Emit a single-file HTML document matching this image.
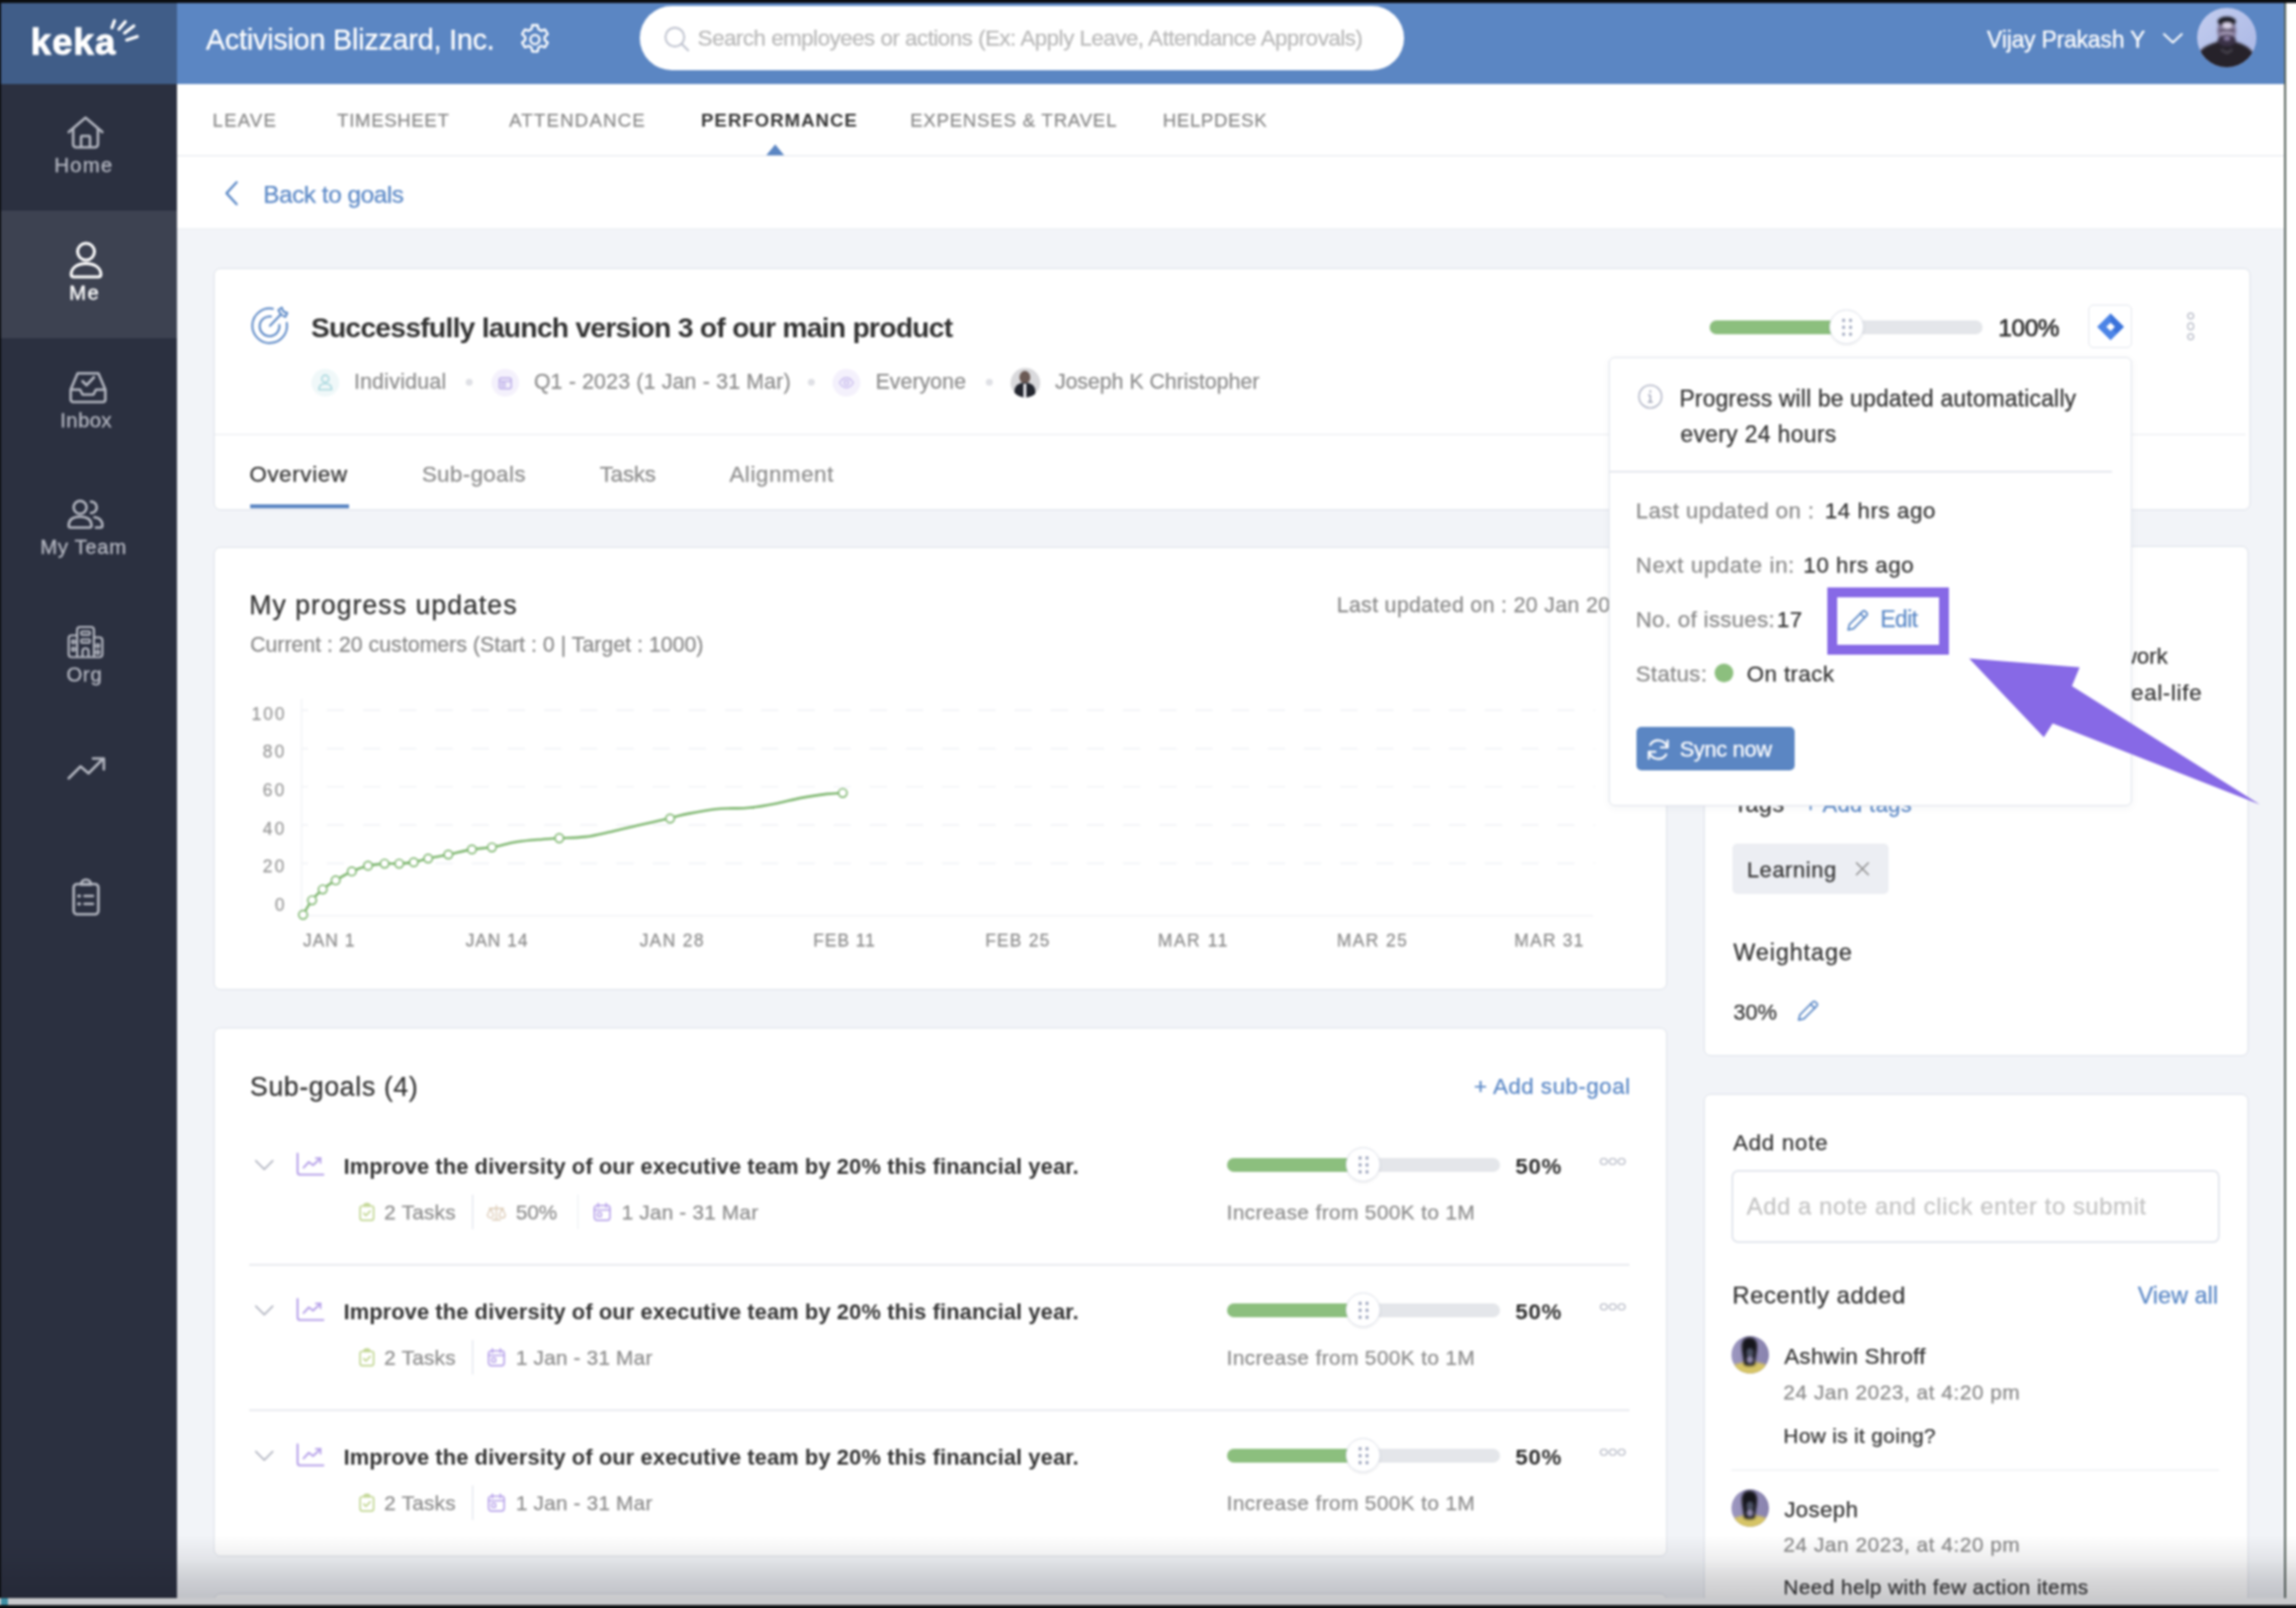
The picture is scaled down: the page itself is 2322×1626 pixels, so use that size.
<!DOCTYPE html>
<html lang="en">
<head>
<meta charset="utf-8">
<title>Keka - Goal details</title>
<style>
html,body{margin:0;padding:0}
html{background:#0b0d10}
body{width:2322px;height:1626px;position:relative;overflow:hidden;background:#0b0d10;font-family:"Liberation Sans",sans-serif;}
#clip{left:0;top:0;width:2322px;height:1626px;overflow:hidden}
#pg{left:-20px;top:-20px;width:2362px;height:1666px;background:#0b0d10;filter:blur(.8px)}
#in{left:20px;top:20px;width:2322px;height:1626px}
div,span,svg,header,nav,main,section,a,p,h1,h2,h3,h4,button{position:absolute;box-sizing:border-box;margin:0;padding:0;border:0}
svg{overflow:visible}
a{text-decoration:none}
.t{white-space:pre;line-height:1;display:block;-webkit-text-stroke:.25px}
button{font-family:inherit}
</style>
</head>
<body>
<div id="clip"><div id="pg"><div id="in">
<div class="app" style="left:1px;top:3px;width:2310px;height:1613px;background:#f2f4f8;"></div>
<div style="left:2310.3px;top:3px;width:1.7px;height:1613px;background:#56625b;"></div>
<div style="left:2312px;top:3px;width:40px;height:1620px;background:#fff;"></div>
<header style="left:1px;top:3px;width:2309px;height:81.5px;background:#5b86c3;">
<div class="logo" style="left:0px;top:0px;width:177.5px;height:81.5px;background:#405d88;"></div>
<span id="t1" class="t" style="left:30.00px;top:21.38px;font-size:37px;color:#fff;font-weight:700;letter-spacing:1.089px;-webkit-text-stroke:0.9px;">keka</span>
<svg style="left:107px;top:13px;" width="36" height="30" viewBox="108 16 36 30" fill="none"><path d="M113.200 28l2.600-7M120.300 29.600l6.400-7.700M125.900 33.400l9.400-7.200M128.100 40.400l10.700-3.500" stroke="#fff" stroke-width="3.200" stroke-linecap="round"/></svg>
<h1 id="t2" class="t" style="left:207.30px;top:23.45px;font-size:29px;color:#fff;letter-spacing:-0.187px;font-weight:400;">Activision Blizzard, Inc.</h1>
<svg style="left:523px;top:20px;" width="34" height="34" viewBox="0 0 34 34" fill="none"><path d="M14.300 2.500h5.400l.9 4.100 2.600 1.500 4-1.300 2.700 4.700-3.100 2.800v3l3.100 2.800-2.700 4.700-4-1.300-2.600 1.500-.9 4.100h-5.400l-.9-4.100-2.600-1.500-4 1.300-2.700-4.700 3.100-2.800v-3L4.100 11.500l2.700-4.700 4 1.300 2.600-1.500z" stroke="#fff" stroke-width="2.300" stroke-linejoin="round"/><circle cx="17" cy="17" r="4.600" stroke="#fff" stroke-width="2.300"/></svg>
<div class="search" style="left:646px;top:3px;width:773px;height:65px;background:#fff;border-radius:33px;">
<svg style="left:24px;top:20px;" width="27" height="27" viewBox="0 0 27 27" fill="none"><circle cx="11.500" cy="11.500" r="9.500" stroke="#bfc3cf" stroke-width="1.900"/><path d="m18.500 18.500 6.500 6.500" stroke="#bfc3cf" stroke-width="1.900" stroke-linecap="round"/></svg>
<span id="t3" class="t" style="left:58.60px;top:22.35px;font-size:22.5px;color:#b9b9b9;letter-spacing:-0.457px;">Search employees or actions (Ex: Apply Leave, Attendance Approvals)</span>
</div>
<span id="t4" class="t" style="left:2008.60px;top:25.83px;font-size:23px;color:#fff;letter-spacing:-0.114px;">Vijay Prakash Y</span>
<svg style="left:2185.5px;top:30px;" width="21" height="12" viewBox="0 0 21 12" fill="none"><path d="m1.500 1.500 9 8.500 9-8.500" stroke="#fff" stroke-width="2" stroke-linecap="round" stroke-linejoin="round"/></svg>
<svg style="left:2220.8px;top:4.8px;" width="60" height="60" viewBox="2221.800 7.800 60 60" fill="none"><defs><clipPath id="cpA"><circle cx="2251.800" cy="37.800" r="30"/></clipPath><linearGradient id="gA" x1="0" y1="0" x2="1" y2="1"><stop offset="0" stop-color="#c3cdef"/><stop offset="1" stop-color="#a9b6e4"/></linearGradient><filter id="blA" x="-20%" y="-20%" width="140%" height="140%"><feGaussianBlur stdDeviation=".9"/></filter></defs><circle cx="2251.800" cy="37.800" r="30" fill="url(#gA)"/><g clip-path="url(#cpA)"><g filter="url(#blA)"><path d="M2222 56c3-7 10-11 19-13.500l4-2.500h13l4 2.500c9 2.500 15 7 18.500 14v16h-58.500z" fill="#25222b"/><ellipse cx="2251.700" cy="31" rx="9.700" ry="13" fill="#857b9b"/><ellipse cx="2251.800" cy="21.500" rx="9.300" ry="5" fill="#1f1c25"/><ellipse cx="2252.300" cy="25.500" rx="5" ry="3.300" fill="#d9d2e6"/><rect x="2243.500" y="29" width="16.500" height="3" rx="1.500" fill="#5b5169"/><ellipse cx="2251.800" cy="34.500" rx="6.500" ry="3" fill="#a79dbb"/><ellipse cx="2251.800" cy="40.500" rx="9.300" ry="6" fill="#3b3347"/><ellipse cx="2252" cy="38.500" rx="3" ry="2.200" fill="#8d7fa6"/><path d="M2246 50l6 3.500 5.500-3.500" stroke="#55515c" stroke-width="1.500"/></g></g></svg>
</header>
<nav class="side" style="left:1px;top:84.5px;width:177.5px;height:1531.5px;background:#2b3040;">
<div style="left:0px;top:128.5px;width:177.5px;height:128.5px;background:#3d4251;"></div>
<svg style="left:67px;top:32.8px;" width="37" height="34" viewBox="0 0 37 34" fill="none"><g stroke="#b3b6c0" stroke-width="2.6"><path d="M1.5 16.5 18.5 2l17 14.5" stroke-linecap="round" stroke-linejoin="round"/><path d="M6 13v16a3 3 0 0 0 3 3h19a3 3 0 0 0 3-3V13"/><path d="M14 32V21.5a1 1 0 0 1 1-1h7a1 1 0 0 1 1 1V32"/></g></svg>
<span id="t5" class="t" style="left:54.00px;top:72.75px;font-size:20.5px;color:#b3b6c0;letter-spacing:1.239px;-webkit-text-stroke:0.35px;">Home</span>
<svg style="left:69px;top:159.1px;" width="34" height="38" viewBox="0 0 34 38" fill="none"><g stroke="#fff" stroke-width="3"><circle cx="17" cy="10.5" r="8.5"/><path d="M2 33.5C2 26.5 8.5 22.5 17 22.5s15 4 15 11a2.5 2.5 0 0 1-2.5 2.5h-25A2.5 2.5 0 0 1 2 33.500z"/></g></svg>
<span id="t6" class="t" style="left:69.00px;top:201.15px;font-size:20.5px;color:#fff;letter-spacing:1.423px;-webkit-text-stroke:0.35px;">Me</span>
<svg style="left:69px;top:291px;" width="38" height="32" viewBox="0 0 38 32" fill="none"><g stroke="#b3b6c0" stroke-width="2.6"><path d="M8.500 1.500h21L36.500 18v10a2.500 2.500 0 0 1-2.500 2.500H4A2.500 2.500 0 0 1 1.500 28V18z" stroke-linejoin="round"/><path d="M1.500 18H11l2.500 5h11L27 18h9.500" stroke-linejoin="round"/><path d="m13.500 9.500 4 4 7.500-8" stroke-linecap="round" stroke-linejoin="round"/></g></svg>
<span id="t7" class="t" style="left:60.00px;top:330.35px;font-size:20.5px;color:#b3b6c0;letter-spacing:0.400px;-webkit-text-stroke:0.35px;">Inbox</span>
<svg style="left:67px;top:420.9px;" width="37" height="30" viewBox="0 0 37 30" fill="none"><g stroke="#b3b6c0" stroke-width="2.6"><circle cx="13" cy="8" r="6.500"/><path d="M1.500 26.500C1.500 20.500 6 17.500 13 17.500s11.500 3 11.500 9a2 2 0 0 1-2 2h-19a2 2 0 0 1-2-2z"/><path d="M24 2.200a5.800 5.800 0 1 1 0 11.600" stroke-linecap="round"/><path d="M27.500 18c5 .500 8 3.500 8 8.500a2 2 0 0 1-2 2H29" stroke-linecap="round"/></g></svg>
<span id="t8" class="t" style="left:39.80px;top:458.75px;font-size:20.5px;color:#b3b6c0;letter-spacing:0.654px;-webkit-text-stroke:0.35px;">My Team</span>
<svg style="left:67px;top:547.1px;" width="37" height="34" viewBox="0 0 37 34" fill="none"><g stroke="#b3b6c0" stroke-width="2.2"><path d="M10 32.500V5a3 3 0 0 1 3-3h11a3 3 0 0 1 3 3v27.500" /><path d="M10 10.500H4.500a3 3 0 0 0-3 3v16a3 3 0 0 0 3 3h28a3 3 0 0 0 3-3v-14a3 3 0 0 0-3-3H27"/><path d="M15.500 32.500v-6a3 3 0 0 1 6 0v6"/><rect x="14" y="6.500" width="9" height="3.500" rx="1" stroke-width="1.800"/><rect x="14" y="14.500" width="9" height="3.500" rx="1" stroke-width="1.800"/><rect x="4.800" y="15.500" width="3" height="3" rx=".8" stroke-width="1.800"/><rect x="4.800" y="23" width="3" height="3" rx=".8" stroke-width="1.800"/><rect x="29.300" y="19.500" width="3" height="3" rx=".8" stroke-width="1.800"/><rect x="29.300" y="26" width="3" height="3" rx=".8" stroke-width="1.800"/></g></svg>
<span id="t9" class="t" style="left:66.20px;top:587.15px;font-size:20.5px;color:#b3b6c0;letter-spacing:0.714px;-webkit-text-stroke:0.35px;">Org</span>
<svg style="left:67px;top:680.5px;" width="39" height="24" viewBox="0 0 39 24" fill="none"><g stroke="#b3b6c0" stroke-width="2.6"><path d="M1.500 22 13.500 10l8 7L36 2.500" stroke-linecap="round" stroke-linejoin="round"/><path d="M26 2h11v11" stroke-linecap="round" stroke-linejoin="round"/></g></svg>
<svg style="left:72px;top:803px;" width="28" height="38" viewBox="0 0 28 38" fill="none"><g stroke="#b3b6c0" stroke-width="2.6"><rect x="1.500" y="6" width="25" height="30.500" rx="3.500"/><path d="M9 6.500c0-3 2-5 5-5s5 2 5 5z" stroke-linejoin="round"/><path d="M12.500 18H21M12.500 26H21" stroke-linecap="round"/><path d="M6.500 18h1M6.500 26h1" stroke-linecap="round" stroke-width="3"/></g></svg>
</nav>
<main style="left:178.5px;top:84.5px;width:2131.5px;height:1531.5px;">
<nav class="subnav" style="left:0px;top:0px;width:2131.5px;height:73.5px;background:#fff;border-bottom:1.5px solid #e3e6ec;">
<a id="t10" class="t" style="left:36.50px;top:28.57px;font-size:18.7px;color:#8a8a8a;letter-spacing:1.275px;">LEAVE</a>
<a id="t11" class="t" style="left:162.50px;top:28.57px;font-size:18.7px;color:#8a8a8a;letter-spacing:0.747px;">TIMESHEET</a>
<a id="t12" class="t" style="left:336.50px;top:28.57px;font-size:18.7px;color:#8a8a8a;letter-spacing:1.298px;">ATTENDANCE</a>
<a id="t13" class="t" style="left:530.50px;top:28.57px;font-size:18.7px;color:#363636;font-weight:700;letter-spacing:1.108px;-webkit-text-stroke:0;">PERFORMANCE</a>
<a id="t14" class="t" style="left:742.00px;top:28.57px;font-size:18.7px;color:#8a8a8a;letter-spacing:0.874px;">EXPENSES &amp; TRAVEL</a>
<a id="t15" class="t" style="left:997.50px;top:28.57px;font-size:18.7px;color:#8a8a8a;letter-spacing:0.751px;">HELPDESK</a>
<svg style="left:596.5px;top:61.5px;" width="18" height="11" viewBox="0 0 18 11" fill="none"><path d="M9 0 18 11H0z" fill="#5b86c3"/></svg>
</nav>
<div class="backrow" style="left:0px;top:73.5px;width:2131.5px;height:74px;background:#fff;border-bottom:1.5px solid #e9ebf0;">
<svg style="left:47.5px;top:24px;" width="16" height="26.7" viewBox="0 0 18 30" fill="none"><path d="M15 2.500 3.500 15 15 27.500" stroke="#5b88c6" stroke-width="2.600" stroke-linecap="round" stroke-linejoin="round"/></svg>
<a id="t16" class="t" style="left:87.80px;top:26.86px;font-size:24.5px;color:#5b88c6;letter-spacing:-0.403px;">Back to goals</a>
</div>
<section class="card goal" style="left:37.5px;top:186.5px;width:2059.5px;height:245.3px;background:#fff;border:1.6px solid #dde1e9;border-radius:7px;">
<svg style="left:36.4px;top:37.4px;" width="40" height="40" viewBox="0 0 40 40" fill="none"><g stroke="#5b88c6" stroke-width="2" stroke-linecap="round"><path d="M23 3.200A17.500 17.500 0 1 0 37 17.500"/><path d="M21 11A10 10 0 1 0 29.500 19.500"/><path d="M20 20.500 31 9"/><path d="M28.500 4.500 31 9l4.500 2.500 2-4-4-1.500-1.500-4z" stroke-linejoin="round" stroke-width="2"/></g></svg>
<h2 id="t17" class="t" style="left:97.40px;top:45.27px;font-size:28.5px;color:#323232;font-weight:700;letter-spacing:-0.722px;-webkit-text-stroke:0;">Successfully launch version 3 of our main product</h2>
<div style="left:97.9px;top:100.6px;width:28px;height:28px;border-radius:50%;background:#f0f8f9;"></div>
<svg style="left:103.9px;top:105.6px;" width="16" height="18" viewBox="0 0 16 18" fill="none"><circle cx="8" cy="5" r="3.600" stroke="#aad8de" stroke-width="1.600"/><path d="M1.500 16c0-4 2.800-6 6.500-6s6.500 2 6.500 6z" stroke="#aad8de" stroke-width="1.600" stroke-linejoin="round"/></svg>
<span id="t18" class="t" style="left:140.90px;top:103.90px;font-size:21.5px;color:#8d8d8d;letter-spacing:0.271px;">Individual</span>
<div style="left:253.9px;top:111.1px;width:7px;height:7px;border-radius:50%;background:#dfe0e5;"></div>
<div style="left:279.9px;top:100.6px;width:28px;height:28px;border-radius:50%;background:#f4f1fc;"></div>
<svg style="left:286.9px;top:107.6px;" width="14" height="14" viewBox="0 0 14 14" fill="none"><rect x="1" y="2.200" width="12" height="10.800" rx="2" stroke="#bcaee8" stroke-width="1.500"/><path d="M1 5.500h12" stroke="#bcaee8" stroke-width="1.500"/><rect x="3.500" y="7.500" width="3.200" height="3.200" stroke="#bcaee8" stroke-width="1.200"/></svg>
<span id="t19" class="t" style="left:322.90px;top:103.90px;font-size:21.5px;color:#8d8d8d;letter-spacing:0.205px;">Q1 - 2023 (1 Jan - 31 Mar)</span>
<div style="left:599.9px;top:111.1px;width:7px;height:7px;border-radius:50%;background:#dfe0e5;"></div>
<div style="left:625.4px;top:100.6px;width:28px;height:28px;border-radius:50%;background:#f4f1fc;"></div>
<svg style="left:631.4px;top:108.6px;" width="16" height="12" viewBox="0 0 16 12" fill="none"><path d="M1 6c2-3.300 4.300-5 7-5s5 1.700 7 5c-2 3.300-4.300 5-7 5S3 9.300 1 6z" stroke="#c9bdee" stroke-width="1.400"/><circle cx="8" cy="6" r="2.300" stroke="#c9bdee" stroke-width="1.400"/></svg>
<span id="t20" class="t" style="left:668.40px;top:103.90px;font-size:21.5px;color:#8d8d8d;letter-spacing:0.090px;">Everyone</span>
<div style="left:779.9px;top:111.1px;width:7px;height:7px;border-radius:50%;background:#dfe0e5;"></div>
<div class="avatar" style="left:804.9px;top:99.6px;width:30px;height:30px;border-radius:50%;overflow:hidden;background:#d9d9dc;">
<div style="left:9px;top:3px;width:11px;height:13px;border-radius:50%;background:#6b5a55;"></div>
<div style="left:4px;top:15px;width:21px;height:18px;border-radius:45% 45% 0 0;background:#23262f;"></div>
<div style="left:13px;top:16px;width:3.5px;height:14px;background:#e8e8ee;"></div>
</div>
<span id="t21" class="t" style="left:849.90px;top:103.90px;font-size:21.5px;color:#8d8d8d;letter-spacing:-0.005px;">Joseph K Christopher</span>
<div style="left:1512.4px;top:51.6px;width:275.3px;height:14.2px;border-radius:8px;background:#e4e6ea;"></div>
<div style="left:1512.4px;top:51.6px;width:138px;height:14.2px;border-radius:8px 0 0 8px;background:#8cbf7e;"></div>
<div style="left:1633.4px;top:41.2px;width:35px;height:35px;border-radius:50%;background:#fff;border:1.800px solid #dfe3ec;box-shadow:0 1px 3px rgba(0,0,0,.08);"></div>
<svg style="left:1643.9px;top:48.7px;" width="14" height="20" viewBox="0 0 14 20" fill="none"><g fill="#a3aac0"><circle cx="3.500" cy="3" r="1.700"/><circle cx="10.500" cy="3" r="1.700"/><circle cx="3.500" cy="10" r="1.700"/><circle cx="10.500" cy="10" r="1.700"/><circle cx="3.500" cy="17" r="1.700"/><circle cx="10.500" cy="17" r="1.700"/></g></svg>
<span id="t22" class="t" style="left:1804.00px;top:47.86px;font-size:24.5px;color:#2e2e2e;letter-spacing:-0.292px;-webkit-text-stroke:0.7px;">100%</span>
<div style="left:1894.9px;top:36.4px;width:43.8px;height:43.8px;border:1.500px solid #e4e7ee;border-radius:5px;background:#fff;"></div>
<svg style="left:1904.4px;top:45.2px;" width="27" height="27" viewBox="0 0 26 26" fill="none"><path d="M13 .500 25.500 13 13 25.500.500 13z" fill="#4c84e6" stroke="#4c84e6" stroke-width="1" stroke-linejoin="round"/><path d="M13 .500 25.500 13 19 19.500 13 13z" fill="#3a72da"/><path d="M13 8.800 17.200 13 13 17.200 8.800 13z" fill="#fff"/></svg>
<div style="left:1994.6px;top:43.9px;width:7.6px;height:7.6px;border-radius:50%;border:1.700px solid #8f95a7;"></div>
<div style="left:1994.6px;top:54.3px;width:7.6px;height:7.6px;border-radius:50%;border:1.700px solid #8f95a7;"></div>
<div style="left:1994.6px;top:64.8px;width:7.6px;height:7.6px;border-radius:50%;border:1.700px solid #8f95a7;"></div>
<div style="left:-0.1px;top:166.9px;width:2054.5px;height:1.5px;background:#e9ebf0;"></div>
<a id="t23" class="t" style="left:35.20px;top:196.85px;font-size:22.5px;color:#333;letter-spacing:0.711px;">Overview</a>
<a id="t24" class="t" style="left:209.70px;top:196.85px;font-size:22.5px;color:#8d8d8d;letter-spacing:0.429px;">Sub-goals</a>
<a id="t25" class="t" style="left:389.50px;top:196.85px;font-size:22.5px;color:#8d8d8d;letter-spacing:-0.166px;">Tasks</a>
<a id="t26" class="t" style="left:520.70px;top:196.85px;font-size:22.5px;color:#8d8d8d;letter-spacing:0.625px;">Alignment</a>
<div style="left:35.6px;top:237.7px;width:100px;height:4px;background:#5b86c3;"></div>
</section>
<section class="card chart" style="left:37.5px;top:468.5px;width:1470px;height:448px;background:#fff;border:1.6px solid #dde1e9;border-radius:7px;">
<h3 id="t27" class="t" style="left:34.90px;top:45.24px;font-size:27px;color:#333;letter-spacing:1.021px;font-weight:400;">My progress updates</h3>
<span id="t28" class="t" style="left:35.90px;top:87.60px;font-size:21.5px;color:#8a8a8a;letter-spacing:0.034px;">Current : 20 customers (Start : 0 | Target : 1000)</span>
<span id="t29" class="t" style="left:1134.90px;top:47.50px;font-size:21.5px;color:#8a8a8a;letter-spacing:0.374px;">Last updated on : 20 Jan 2023</span>
<svg style="left:72.4px;top:145.4px;" width="1340" height="240" viewBox="290 700 1340 240" fill="none"><path d="M306.500 719.3H1614" stroke="#f0f2f6" stroke-width="1.400" stroke-dasharray="17.400 19.200" stroke-dashoffset="11.500"/><path d="M306.500 758H1614" stroke="#f0f2f6" stroke-width="1.400" stroke-dasharray="17.400 19.200" stroke-dashoffset="11.500"/><path d="M306.500 796.6H1614" stroke="#f0f2f6" stroke-width="1.400" stroke-dasharray="17.400 19.200" stroke-dashoffset="11.500"/><path d="M306.500 835.3H1614" stroke="#f0f2f6" stroke-width="1.400" stroke-dasharray="17.400 19.200" stroke-dashoffset="11.500"/><path d="M306.500 874H1614" stroke="#f0f2f6" stroke-width="1.400" stroke-dasharray="17.400 19.200" stroke-dashoffset="11.500"/><path d="M306 708V927H1612" stroke="#f2f3f7" stroke-width="1.500"/><path d="M307.5 926.0C309.0 923.5 313.2 915.7 316.6 911.3C320.0 906.9 323.3 903.7 327.4 900.3C331.5 896.9 335.5 894.3 340.5 891.2C345.5 888.1 351.2 884.7 356.8 882.2C362.4 879.7 367.6 877.7 373.2 876.4C378.8 875.1 384.5 874.7 389.9 874.3C395.3 873.9 399.7 874.5 404.7 874.3C409.7 874.1 414.4 873.8 419.4 872.9C424.4 872.0 428.1 870.4 434.0 869.1C439.9 867.8 446.9 866.7 454.4 865.1C461.9 863.5 470.8 861.1 478.3 859.9C485.8 858.7 490.8 859.1 498.5 857.8C506.2 856.5 514.9 853.7 523.6 852.3C532.3 850.9 542.4 850.3 549.7 849.7C557.0 849.1 559.2 848.9 566.6 848.5C574.0 848.1 584.2 848.2 593.2 847.1C602.2 846.0 610.5 843.8 619.4 841.9C628.3 840.0 635.4 838.1 645.5 835.8C655.6 833.5 669.8 830.3 678.7 828.2C687.6 826.1 690.1 825.1 697.8 823.6C705.5 822.1 716.5 820.1 723.9 819.2C731.3 818.3 735.4 818.6 741.3 818.4C747.2 818.2 751.3 818.6 758.7 817.8C766.1 817.0 776.0 815.4 784.9 813.7C793.8 812.0 802.1 809.6 811.0 807.9C819.9 806.2 829.9 804.8 837.1 803.9C844.3 803.0 850.5 803.0 853.3 802.8" stroke="#84ba76" stroke-width="2.600" fill="none" stroke-linecap="round"/><circle cx="307.5" cy="926" r="4.300" fill="#fff" stroke="#84ba76" stroke-width="1.700"/><circle cx="316.6" cy="911.3" r="4.300" fill="#fff" stroke="#84ba76" stroke-width="1.700"/><circle cx="327.4" cy="900.3" r="4.300" fill="#fff" stroke="#84ba76" stroke-width="1.700"/><circle cx="340.5" cy="891.2" r="4.300" fill="#fff" stroke="#84ba76" stroke-width="1.700"/><circle cx="356.8" cy="882.2" r="4.300" fill="#fff" stroke="#84ba76" stroke-width="1.700"/><circle cx="373.2" cy="876.4" r="4.300" fill="#fff" stroke="#84ba76" stroke-width="1.700"/><circle cx="389.9" cy="874.3" r="4.300" fill="#fff" stroke="#84ba76" stroke-width="1.700"/><circle cx="404.7" cy="874.3" r="4.300" fill="#fff" stroke="#84ba76" stroke-width="1.700"/><circle cx="419.4" cy="872.9" r="4.300" fill="#fff" stroke="#84ba76" stroke-width="1.700"/><circle cx="434" cy="869.1" r="4.300" fill="#fff" stroke="#84ba76" stroke-width="1.700"/><circle cx="454.4" cy="865.1" r="4.300" fill="#fff" stroke="#84ba76" stroke-width="1.700"/><circle cx="478.3" cy="859.9" r="4.300" fill="#fff" stroke="#84ba76" stroke-width="1.700"/><circle cx="498.5" cy="857.8" r="4.300" fill="#fff" stroke="#84ba76" stroke-width="1.700"/><circle cx="566.6" cy="848.5" r="4.300" fill="#fff" stroke="#84ba76" stroke-width="1.700"/><circle cx="678.7" cy="828.6" r="4.300" fill="#fff" stroke="#84ba76" stroke-width="1.700"/><circle cx="853.3" cy="802.8" r="4.300" fill="#fff" stroke="#84ba76" stroke-width="1.700"/></svg>
<span id="t30" class="t" style="left:70.63px;top:159.59px;font-size:17.5px;color:#9a9a9a;letter-spacing:2.017px;transform:translateX(-100%);margin-left:2.017px;">100</span>
<span id="t31" class="t" style="left:70.63px;top:198.29px;font-size:17.5px;color:#9a9a9a;letter-spacing:2.467px;transform:translateX(-100%);margin-left:2.467px;">80</span>
<span id="t32" class="t" style="left:70.63px;top:236.89px;font-size:17.5px;color:#9a9a9a;letter-spacing:2.467px;transform:translateX(-100%);margin-left:2.467px;">60</span>
<span id="t33" class="t" style="left:70.63px;top:275.59px;font-size:17.5px;color:#9a9a9a;letter-spacing:2.467px;transform:translateX(-100%);margin-left:2.467px;">40</span>
<span id="t34" class="t" style="left:70.63px;top:314.29px;font-size:17.5px;color:#9a9a9a;letter-spacing:2.467px;transform:translateX(-100%);margin-left:2.467px;">20</span>
<span id="t35" class="t" style="left:70.63px;top:352.59px;font-size:17.5px;color:#9a9a9a;transform:translateX(-100%);margin-left:0.000px;">0</span>
<span id="t36" class="t" style="left:89.50px;top:389.39px;font-size:17.5px;color:#8f8f8f;letter-spacing:1.069px;">JAN 1</span>
<span id="t37" class="t" style="left:253.90px;top:389.39px;font-size:17.5px;color:#8f8f8f;letter-spacing:1.029px;">JAN 14</span>
<span id="t38" class="t" style="left:429.90px;top:389.39px;font-size:17.5px;color:#8f8f8f;letter-spacing:1.429px;">JAN 28</span>
<span id="t39" class="t" style="left:605.50px;top:389.39px;font-size:17.5px;color:#8f8f8f;letter-spacing:1.014px;">FEB 11</span>
<span id="t40" class="t" style="left:779.40px;top:389.39px;font-size:17.5px;color:#8f8f8f;letter-spacing:1.294px;">FEB 25</span>
<span id="t41" class="t" style="left:953.90px;top:389.39px;font-size:17.5px;color:#8f8f8f;letter-spacing:1.703px;">MAR 11</span>
<span id="t42" class="t" style="left:1134.90px;top:389.39px;font-size:17.5px;color:#8f8f8f;letter-spacing:1.503px;">MAR 25</span>
<span id="t43" class="t" style="left:1314.60px;top:389.39px;font-size:17.5px;color:#8f8f8f;letter-spacing:1.303px;">MAR 31</span>
</section>
<section class="card subgoals" style="left:37.5px;top:954.2px;width:1470px;height:535.5px;background:#fff;border:1.6px solid #dde1e9;border-radius:7px;">
<h3 id="t44" class="t" style="left:35.80px;top:46.64px;font-size:27px;color:#333;letter-spacing:0.626px;font-weight:400;">Sub-goals (4)</h3>
<a id="t45" class="t" style="left:1273.70px;top:47.85px;font-size:22.5px;color:#5b88c6;letter-spacing:0.540px;">+ Add sub-goal</a>
<svg style="left:39.9px;top:132.4px;" width="20.5" height="12.5" viewBox="0 0 23 14" fill="none"><path d="m2 2 9.500 9.500L21 2" stroke="#b4b7c2" stroke-width="2" stroke-linecap="round" stroke-linejoin="round"/></svg>
<svg style="left:82.4px;top:124.9px;" width="29.5" height="24.7" viewBox="0 0 31 26" fill="none"><g stroke="#b9a5ea" stroke-width="2.200" stroke-linecap="round" stroke-linejoin="round"><path d="M2 1.500V21a3 3 0 0 0 3 3h24.500"/><path d="m8.500 16.500 5.500-6 4.500 3.500 8-7.500"/><path d="M21.500 6.500h5v5" stroke-width="1.900"/></g></svg>
<h4 id="t46" class="t" style="left:130.40px;top:128.98px;font-size:22px;color:#343434;font-weight:700;letter-spacing:0.159px;-webkit-text-stroke:0;">Improve the diversity of our executive team by 20% this financial year.</h4>
<svg style="left:145.9px;top:176.4px;" width="16" height="19" viewBox="0 0 16 19" fill="none"><g stroke="#c3d795" stroke-width="1.700" stroke-linejoin="round"><rect x="1.200" y="3.500" width="13.600" height="14.300" rx="2"/><path d="M5 3.500c0-1.500 1.300-2.500 3-2.500s3 1 3 2.500z" fill="#c3d795"/><path d="m4.800 10.800 2.300 2.300 4.200-4.400" stroke-linecap="round"/></g></svg>
<span id="t47" class="t" style="left:171.60px;top:175.42px;font-size:21px;color:#8d8d8d;letter-spacing:0.218px;">2 Tasks</span>
<div style="left:260.4px;top:168.4px;width:1.5px;height:35px;background:#eceef3;"></div>
<svg style="left:275.4px;top:176.9px;" width="20" height="18" viewBox="0 0 20 18" fill="none"><g stroke="#dccbb6" stroke-width="1.300"><path d="M10 1.500v15M2.500 5h15M5.500 16.500h9"/><path d="M1 11.500 4 5l3 6.500a3 3 0 0 1-6 0zM13 11.500 16 5l3 6.500a3 3 0 0 1-6 0z" stroke-linejoin="round"/></g></svg>
<span id="t48" class="t" style="left:304.70px;top:175.42px;font-size:21px;color:#8d8d8d;letter-spacing:-0.179px;">50%</span>
<div style="left:366.9px;top:168.4px;width:1.5px;height:35px;background:#eceef3;"></div>
<svg style="left:383.1px;top:176.4px;" width="18" height="19" viewBox="0 0 18 19" fill="none"><g stroke="#b9a5ea" stroke-width="1.700"><rect x="1.200" y="3" width="15.600" height="14.800" rx="2.500"/><path d="M1.200 7.500h15.600M5 1v3.500M13 1v3.500" stroke-linecap="round"/><rect x="4.300" y="10.300" width="4" height="4" rx=".8" stroke-width="1.400"/></g></svg>
<span id="t49" class="t" style="left:411.70px;top:175.42px;font-size:21px;color:#8d8d8d;letter-spacing:0.200px;">1 Jan - 31 Mar</span>
<div style="left:1024.4px;top:131.1px;width:276px;height:14px;border-radius:7px;background:#e4e6ea;"></div>
<div style="left:1024.4px;top:131.1px;width:138px;height:14px;border-radius:7px 0 0 7px;background:#8cbf7e;"></div>
<div style="left:1144.2px;top:120.4px;width:35px;height:35px;border-radius:50%;background:#fff;border:1.800px solid #dfe3ec;box-shadow:0 1px 3px rgba(0,0,0,.08);"></div>
<svg style="left:1155.4px;top:128.4px;" width="14" height="20" viewBox="0 0 14 20" fill="none"><g fill="#9ea5bd"><rect x="2" y="1.500" width="3" height="3"/><rect x="9" y="1.500" width="3" height="3"/><rect x="2" y="8.500" width="3" height="3"/><rect x="9" y="8.500" width="3" height="3"/><rect x="2" y="15.500" width="3" height="3"/><rect x="9" y="15.500" width="3" height="3"/></g></svg>
<span id="t50" class="t" style="left:1315.40px;top:129.35px;font-size:22.5px;color:#2e2e2e;font-weight:700;letter-spacing:0.737px;-webkit-text-stroke:0;">50%</span>
<div style="left:1401.4px;top:130.9px;width:7.5px;height:7.5px;border-radius:50%;border:1.700px solid #9499aa;"></div>
<div style="left:1410.4px;top:130.9px;width:7.5px;height:7.5px;border-radius:50%;border:1.700px solid #9499aa;"></div>
<div style="left:1419.4px;top:130.9px;width:7.5px;height:7.5px;border-radius:50%;border:1.700px solid #9499aa;"></div>
<span id="t51" class="t" style="left:1023.40px;top:175.32px;font-size:21px;color:#8d8d8d;letter-spacing:0.408px;">Increase from 500K to 1M</span>
<div style="left:35.4px;top:238.7px;width:1396px;height:1.5px;background:#e9ebf0;"></div>
<svg style="left:39.9px;top:279.4px;" width="20.5" height="12.5" viewBox="0 0 23 14" fill="none"><path d="m2 2 9.500 9.500L21 2" stroke="#b4b7c2" stroke-width="2" stroke-linecap="round" stroke-linejoin="round"/></svg>
<svg style="left:82.4px;top:271.9px;" width="29.5" height="24.7" viewBox="0 0 31 26" fill="none"><g stroke="#b9a5ea" stroke-width="2.200" stroke-linecap="round" stroke-linejoin="round"><path d="M2 1.500V21a3 3 0 0 0 3 3h24.500"/><path d="m8.500 16.500 5.500-6 4.500 3.500 8-7.500"/><path d="M21.500 6.500h5v5" stroke-width="1.900"/></g></svg>
<h4 id="t52" class="t" style="left:130.40px;top:275.98px;font-size:22px;color:#343434;font-weight:700;letter-spacing:0.159px;-webkit-text-stroke:0;">Improve the diversity of our executive team by 20% this financial year.</h4>
<svg style="left:145.9px;top:323.4px;" width="16" height="19" viewBox="0 0 16 19" fill="none"><g stroke="#c3d795" stroke-width="1.700" stroke-linejoin="round"><rect x="1.200" y="3.500" width="13.600" height="14.300" rx="2"/><path d="M5 3.500c0-1.500 1.300-2.500 3-2.500s3 1 3 2.500z" fill="#c3d795"/><path d="m4.800 10.800 2.300 2.300 4.200-4.400" stroke-linecap="round"/></g></svg>
<span id="t53" class="t" style="left:171.60px;top:322.42px;font-size:21px;color:#8d8d8d;letter-spacing:0.218px;">2 Tasks</span>
<div style="left:260.4px;top:315.4px;width:1.5px;height:35px;background:#eceef3;"></div>
<svg style="left:276.1px;top:323.4px;" width="18" height="19" viewBox="0 0 18 19" fill="none"><g stroke="#b9a5ea" stroke-width="1.700"><rect x="1.200" y="3" width="15.600" height="14.800" rx="2.500"/><path d="M1.200 7.500h15.600M5 1v3.500M13 1v3.500" stroke-linecap="round"/><rect x="4.300" y="10.300" width="4" height="4" rx=".8" stroke-width="1.400"/></g></svg>
<span id="t54" class="t" style="left:304.70px;top:322.42px;font-size:21px;color:#8d8d8d;letter-spacing:0.200px;">1 Jan - 31 Mar</span>
<div style="left:1024.4px;top:278.1px;width:276px;height:14px;border-radius:7px;background:#e4e6ea;"></div>
<div style="left:1024.4px;top:278.1px;width:138px;height:14px;border-radius:7px 0 0 7px;background:#8cbf7e;"></div>
<div style="left:1144.2px;top:267.4px;width:35px;height:35px;border-radius:50%;background:#fff;border:1.800px solid #dfe3ec;box-shadow:0 1px 3px rgba(0,0,0,.08);"></div>
<svg style="left:1155.4px;top:275.4px;" width="14" height="20" viewBox="0 0 14 20" fill="none"><g fill="#9ea5bd"><rect x="2" y="1.500" width="3" height="3"/><rect x="9" y="1.500" width="3" height="3"/><rect x="2" y="8.500" width="3" height="3"/><rect x="9" y="8.500" width="3" height="3"/><rect x="2" y="15.500" width="3" height="3"/><rect x="9" y="15.500" width="3" height="3"/></g></svg>
<span id="t55" class="t" style="left:1315.40px;top:276.35px;font-size:22.5px;color:#2e2e2e;font-weight:700;letter-spacing:0.737px;-webkit-text-stroke:0;">50%</span>
<div style="left:1401.4px;top:277.9px;width:7.5px;height:7.5px;border-radius:50%;border:1.700px solid #9499aa;"></div>
<div style="left:1410.4px;top:277.9px;width:7.5px;height:7.5px;border-radius:50%;border:1.700px solid #9499aa;"></div>
<div style="left:1419.4px;top:277.9px;width:7.5px;height:7.5px;border-radius:50%;border:1.700px solid #9499aa;"></div>
<span id="t56" class="t" style="left:1023.40px;top:322.32px;font-size:21px;color:#8d8d8d;letter-spacing:0.408px;">Increase from 500K to 1M</span>
<div style="left:35.4px;top:385.7px;width:1396px;height:1.5px;background:#e9ebf0;"></div>
<svg style="left:39.9px;top:426.4px;" width="20.5" height="12.5" viewBox="0 0 23 14" fill="none"><path d="m2 2 9.500 9.500L21 2" stroke="#b4b7c2" stroke-width="2" stroke-linecap="round" stroke-linejoin="round"/></svg>
<svg style="left:82.4px;top:418.9px;" width="29.5" height="24.7" viewBox="0 0 31 26" fill="none"><g stroke="#b9a5ea" stroke-width="2.200" stroke-linecap="round" stroke-linejoin="round"><path d="M2 1.500V21a3 3 0 0 0 3 3h24.500"/><path d="m8.500 16.500 5.500-6 4.500 3.500 8-7.500"/><path d="M21.500 6.500h5v5" stroke-width="1.900"/></g></svg>
<h4 id="t57" class="t" style="left:130.40px;top:422.98px;font-size:22px;color:#343434;font-weight:700;letter-spacing:0.159px;-webkit-text-stroke:0;">Improve the diversity of our executive team by 20% this financial year.</h4>
<svg style="left:145.9px;top:470.4px;" width="16" height="19" viewBox="0 0 16 19" fill="none"><g stroke="#c3d795" stroke-width="1.700" stroke-linejoin="round"><rect x="1.200" y="3.500" width="13.600" height="14.300" rx="2"/><path d="M5 3.500c0-1.500 1.300-2.500 3-2.500s3 1 3 2.500z" fill="#c3d795"/><path d="m4.800 10.800 2.300 2.300 4.200-4.400" stroke-linecap="round"/></g></svg>
<span id="t58" class="t" style="left:171.60px;top:469.42px;font-size:21px;color:#8d8d8d;letter-spacing:0.218px;">2 Tasks</span>
<div style="left:260.4px;top:462.4px;width:1.5px;height:35px;background:#eceef3;"></div>
<svg style="left:276.1px;top:470.4px;" width="18" height="19" viewBox="0 0 18 19" fill="none"><g stroke="#b9a5ea" stroke-width="1.700"><rect x="1.200" y="3" width="15.600" height="14.800" rx="2.500"/><path d="M1.200 7.500h15.600M5 1v3.500M13 1v3.500" stroke-linecap="round"/><rect x="4.300" y="10.300" width="4" height="4" rx=".8" stroke-width="1.400"/></g></svg>
<span id="t59" class="t" style="left:304.70px;top:469.42px;font-size:21px;color:#8d8d8d;letter-spacing:0.200px;">1 Jan - 31 Mar</span>
<div style="left:1024.4px;top:425.1px;width:276px;height:14px;border-radius:7px;background:#e4e6ea;"></div>
<div style="left:1024.4px;top:425.1px;width:138px;height:14px;border-radius:7px 0 0 7px;background:#8cbf7e;"></div>
<div style="left:1144.2px;top:414.4px;width:35px;height:35px;border-radius:50%;background:#fff;border:1.800px solid #dfe3ec;box-shadow:0 1px 3px rgba(0,0,0,.08);"></div>
<svg style="left:1155.4px;top:422.4px;" width="14" height="20" viewBox="0 0 14 20" fill="none"><g fill="#9ea5bd"><rect x="2" y="1.500" width="3" height="3"/><rect x="9" y="1.500" width="3" height="3"/><rect x="2" y="8.500" width="3" height="3"/><rect x="9" y="8.500" width="3" height="3"/><rect x="2" y="15.500" width="3" height="3"/><rect x="9" y="15.500" width="3" height="3"/></g></svg>
<span id="t60" class="t" style="left:1315.40px;top:423.35px;font-size:22.5px;color:#2e2e2e;font-weight:700;letter-spacing:0.737px;-webkit-text-stroke:0;">50%</span>
<div style="left:1401.4px;top:424.9px;width:7.5px;height:7.5px;border-radius:50%;border:1.700px solid #9499aa;"></div>
<div style="left:1410.4px;top:424.9px;width:7.5px;height:7.5px;border-radius:50%;border:1.700px solid #9499aa;"></div>
<div style="left:1419.4px;top:424.9px;width:7.5px;height:7.5px;border-radius:50%;border:1.700px solid #9499aa;"></div>
<span id="t61" class="t" style="left:1023.40px;top:469.32px;font-size:21px;color:#8d8d8d;letter-spacing:0.408px;">Increase from 500K to 1M</span>
</section>
<div style="left:37.5px;top:1526.5px;width:1470px;height:30px;background:#fff;border:1.6px solid #dde1e9;border-radius:7px;"></div>
<section class="card details" style="left:1544.5px;top:467.8px;width:551px;height:516px;background:#fff;border:1.6px solid #dde1e9;border-radius:7px;">
<h3 id="t62" class="t" style="left:27.40px;top:47.21px;font-size:23.5px;color:#333;font-weight:400;">Description</h3>
<p id="t63" class="t" style="left:468.35px;top:99.25px;font-size:22.5px;color:#333;transform:translateX(-100%);margin-left:0.000px;">Ship the new release and validate that it will work</p>
<p id="t64" class="t" style="left:503.11px;top:136.35px;font-size:22.5px;color:#333;transform:translateX(-100%);margin-left:0.000px;letter-spacing:.7px;">for our customers across a number of real-life</p>
<p id="t65" class="t" style="left:28.40px;top:171.55px;font-size:22.5px;color:#333;">scenarios before the quarter ends.</p>
<h3 id="t66" class="t" style="left:28.90px;top:248.81px;font-size:23.5px;color:#333;letter-spacing:0.537px;font-weight:400;">Tags</h3>
<a id="t67" class="t" style="left:100.70px;top:250.08px;font-size:22px;color:#5b88c6;letter-spacing:0.444px;">+ Add tags</a>
<div class="chip" style="left:28.1px;top:299.7px;width:157.5px;height:50.6px;background:#eceef3;border-radius:5px;">
<span id="t68" class="t" style="left:14.60px;top:16.18px;font-size:22px;color:#333;letter-spacing:0.658px;">Learning</span>
<svg style="left:124.3px;top:18.4px;" width="15" height="15" viewBox="0 0 15 15" fill="none"><path d="m1.500 1.500 12 12M13.500 1.500l-12 12" stroke="#8e8e8e" stroke-width="1.500" stroke-linecap="round"/></svg>
</div>
<h3 id="t69" class="t" style="left:29.10px;top:399.01px;font-size:23.5px;color:#333;letter-spacing:0.968px;font-weight:400;">Weightage</h3>
<span id="t70" class="t" style="left:29.10px;top:459.28px;font-size:22px;color:#333;letter-spacing:-0.035px;">30%</span>
<svg style="left:93.4px;top:457.3px;" width="22.5" height="22.5" viewBox="0 0 22 22" fill="none"><g stroke="#5b88c6" stroke-width="1.700" stroke-linejoin="round" stroke-linecap="round"><path d="M2 20l1.300-5.300L15.800 2.200a2 2 0 0 1 2.900 0l1.100 1.100a2 2 0 0 1 0 2.900L7.300 18.700z"/><path d="m13.800 4.200 4 4"/></g></svg>
</section>
<section class="card notes" style="left:1544.5px;top:1021.5px;width:551px;height:540px;background:#fff;border:1.6px solid #dde1e9;border-radius:7px;">
<h3 id="t71" class="t" style="left:28.70px;top:37.55px;font-size:22.5px;color:#333;letter-spacing:0.777px;font-weight:400;">Add note</h3>
<div class="input" style="left:27px;top:76px;width:494.2px;height:73.8px;border:2px solid #e4e7ee;border-radius:7px;background:#fff;">
<span id="t72" class="t" style="left:13.60px;top:23.48px;font-size:24px;color:#c4c4c4;letter-spacing:0.632px;">Add a note and click enter to submit</span>
</div>
<h3 id="t73" class="t" style="left:28.00px;top:190.78px;font-size:24px;color:#333;letter-spacing:0.620px;font-weight:400;">Recently added</h3>
<a id="t74" class="t" style="left:437.90px;top:191.81px;font-size:23.5px;color:#5b88c6;letter-spacing:0.096px;">View all</a>
<svg style="left:26.9px;top:244.4px;" width="38" height="38" viewBox="1751.500 1352 38 38" fill="none"><defs><clipPath id="cp0"><circle cx="1770.500" cy="1371" r="19"/></clipPath><linearGradient id="g0" x1="0" y1="0" x2="1" y2="0"><stop offset="0" stop-color="#9c97c0"/><stop offset="1" stop-color="#8983ae"/></linearGradient><filter id="bl0" x="-20%" y="-20%" width="140%" height="140%"><feGaussianBlur stdDeviation=".8"/></filter></defs><circle cx="1770.500" cy="1371" r="19" fill="url(#g0)"/><g clip-path="url(#cp0)"><g filter="url(#bl0)"><ellipse cx="1770.500" cy="1398" rx="30" ry="20" fill="#d6c466"/><path d="M1762 1362c0-6 3.500-8.500 7.800-8.500s7.800 2.500 7.800 8.500c0 5-1.200 10-1.800 14v5c-2 2-10 2-12 0v-5c-.6-4-1.800-9-1.800-14z" fill="#17151d"/><ellipse cx="1770.300" cy="1369" rx="3.200" ry="4.600" fill="#4d5266"/><ellipse cx="1770.300" cy="1376" rx="2.800" ry="3.300" fill="#9690b4"/></g></g></svg>
<span id="t75" class="t" style="left:80.40px;top:254.15px;font-size:22.5px;color:#333;letter-spacing:0.379px;">Ashwin Shroff</span>
<span id="t76" class="t" style="left:79.60px;top:289.72px;font-size:21px;color:#8a8a8a;letter-spacing:0.568px;">24 Jan 2023, at 4:20 pm</span>
<p id="t77" class="t" style="left:79.60px;top:333.82px;font-size:21px;color:#333;letter-spacing:0.376px;">How is it going?</p>
<div style="left:27px;top:378.7px;width:493.4px;height:1.5px;background:#e9ebf0;"></div>
<svg style="left:26.9px;top:398.6px;" width="38" height="38" viewBox="1751.500 1506.2 38 38" fill="none"><defs><clipPath id="cp154"><circle cx="1770.500" cy="1525.2" r="19"/></clipPath><linearGradient id="g154" x1="0" y1="0" x2="1" y2="0"><stop offset="0" stop-color="#9c97c0"/><stop offset="1" stop-color="#8983ae"/></linearGradient><filter id="bl154" x="-20%" y="-20%" width="140%" height="140%"><feGaussianBlur stdDeviation=".8"/></filter></defs><circle cx="1770.500" cy="1525.2" r="19" fill="url(#g154)"/><g clip-path="url(#cp154)"><g filter="url(#bl154)"><ellipse cx="1770.500" cy="1552.2" rx="30" ry="20" fill="#d6c466"/><path d="M1762 1516.2c0-6 3.500-8.500 7.800-8.500s7.800 2.500 7.800 8.500c0 5-1.200 10-1.800 14v5c-2 2-10 2-12 0v-5c-.6-4-1.800-9-1.800-14z" fill="#17151d"/><ellipse cx="1770.300" cy="1523.2" rx="3.200" ry="4.600" fill="#4d5266"/><ellipse cx="1770.300" cy="1530.2" rx="2.800" ry="3.300" fill="#9690b4"/></g></g></svg>
<span id="t78" class="t" style="left:80.40px;top:408.75px;font-size:22.5px;color:#333;letter-spacing:0.412px;">Joseph</span>
<span id="t79" class="t" style="left:79.60px;top:443.92px;font-size:21px;color:#8a8a8a;letter-spacing:0.568px;">24 Jan 2023, at 4:20 pm</span>
<p id="t80" class="t" style="left:79.60px;top:487.42px;font-size:21px;color:#333;letter-spacing:0.430px;">Need help with few action items</p>
</section>
</main>
<div class="popup" style="left:1626.8px;top:361px;width:529.6px;height:454px;background:#fff;border:1.500px solid #e1e5ed;border-radius:6px;box-shadow:0 2px 8px rgba(40,50,80,.05);">
<svg style="left:28.2px;top:26.4px;" width="26" height="26" viewBox="0 0 26 26" fill="none"><circle cx="13" cy="13" r="11.500" stroke="#b5b9c9" stroke-width="1.600"/><path d="M13 11.500v7M10.800 11.500H13M10.500 18.500h5" stroke="#9fa4b8" stroke-width="1.500"/><circle cx="13" cy="7.800" r="1.100" fill="#9fa4b8"/></svg>
<p id="t81" class="t" style="left:70.70px;top:29.73px;font-size:23px;color:#333;letter-spacing:0.230px;">Progress will be updated automatically</p>
<p id="t82" class="t" style="left:71.70px;top:65.73px;font-size:23px;color:#333;letter-spacing:0.412px;">every 24 hours</p>
<div style="left:0.7px;top:114.4px;width:507.5px;height:1.8px;background:#e6e8ee;"></div>
<span id="t83" class="t" style="left:26.50px;top:143.65px;font-size:22.5px;color:#8a8a8a;letter-spacing:0.397px;">Last updated on :</span>
<span id="t84" class="t" style="left:217.70px;top:143.65px;font-size:22.5px;color:#333;letter-spacing:0.610px;">14 hrs ago</span>
<span id="t85" class="t" style="left:26.50px;top:198.55px;font-size:22.5px;color:#8a8a8a;letter-spacing:0.636px;">Next update in:</span>
<span id="t86" class="t" style="left:196.00px;top:198.55px;font-size:22.5px;color:#333;letter-spacing:0.576px;">10 hrs ago</span>
<span id="t87" class="t" style="left:26.50px;top:253.65px;font-size:22.5px;color:#8a8a8a;letter-spacing:0.319px;">No. of issues:</span>
<span id="t88" class="t" style="left:169.30px;top:253.65px;font-size:22.5px;color:#333;letter-spacing:0.487px;">17</span>
<svg style="left:239.7px;top:253.7px;" width="23" height="23" viewBox="0 0 22 22" fill="none"><g stroke="#5b88c6" stroke-width="1.700" stroke-linejoin="round" stroke-linecap="round"><path d="M2 20l1.300-5.300L15.800 2.200a2 2 0 0 1 2.900 0l1.100 1.100a2 2 0 0 1 0 2.900L7.300 18.700z"/><path d="m13.800 4.200 4 4"/></g></svg>
<a id="t89" class="t" style="left:273.90px;top:253.23px;font-size:23px;color:#5b88c6;letter-spacing:-0.581px;">Edit</a>
<span id="t90" class="t" style="left:26.50px;top:308.85px;font-size:22.5px;color:#8a8a8a;letter-spacing:0.302px;">Status:</span>
<div style="left:106.2px;top:308.9px;width:19.5px;height:19.5px;border-radius:50%;background:#8cbf7e;"></div>
<span id="t91" class="t" style="left:138.70px;top:308.85px;font-size:22.5px;color:#333;letter-spacing:0.461px;">On track</span>
<button class="btn" style="left:27.5px;top:373px;width:159.6px;height:44px;background:#5b86c3;border-radius:5px;">
<svg style="left:8.7px;top:9.7px;" width="26" height="26" viewBox="0 0 24 24" fill="none"><g stroke="#fff" stroke-width="1.900" stroke-linecap="round" stroke-linejoin="round"><path d="M20.500 10A8.800 8.800 0 0 0 4.500 7.500"/><path d="M3.500 14a8.800 8.800 0 0 0 16 2.500"/><path d="M20.800 3.500V10h-6.300M3.200 20.500V14h6.300"/></g></svg>
<span id="t92" class="t" style="left:43.40px;top:11.78px;font-size:22px;color:#fff;letter-spacing:-0.270px;">Sync now</span>
</button>
</div>
<div style="left:1848px;top:594.3px;width:122.7px;height:67.5px;border:10px solid #8769e6;"></div>
<svg style="left:1985px;top:660px;" width="305" height="158" viewBox="1985 660 305 158" fill="none"><path d="M1991.400 665.800 2103.200 674.700 2095.400 693.800 2285.400 813.400 2075.900 731.400 2067 745.600z" fill="#8769e6"/></svg>
<div style="left:1px;top:1552px;width:2351px;height:64px;background:linear-gradient(to bottom,rgba(20,20,30,0) 0,rgba(20,20,30,.07) 38%,rgba(20,20,30,.17) 72%,rgba(20,20,30,.225) 100%);"></div>
<div style="left:-20px;top:1615.6px;width:2372px;height:7px;background:#c9cacd;"></div>
<div style="left:1px;top:1615.6px;width:7px;height:7px;background:#3f8ea3;"></div>
<div style="left:-20px;top:1622.5px;width:2372px;height:30px;background:#0b0d10;"></div>
</div></div></div>
</body>
</html>
